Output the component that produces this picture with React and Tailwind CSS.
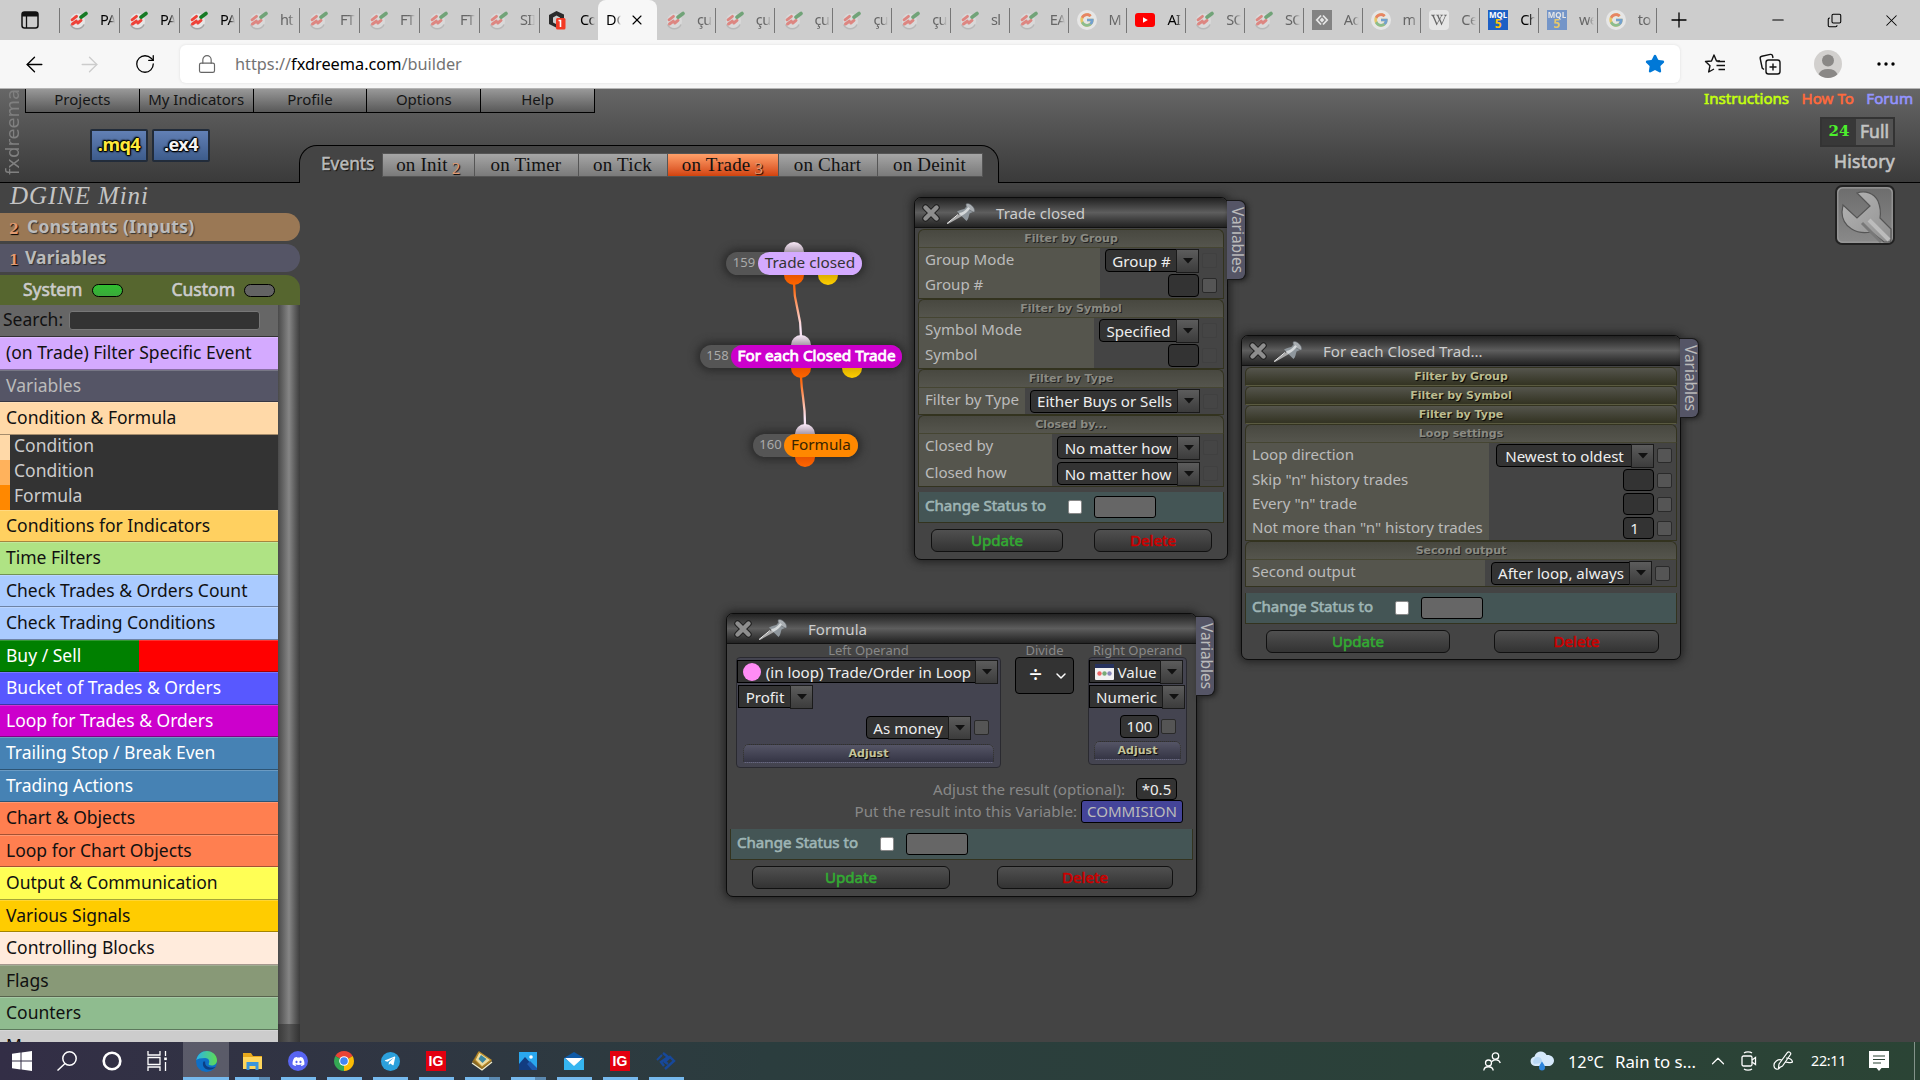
import {
  ArrowLeft,
  ArrowRight,
  RotateCw,
  Lock,
  Star,
  Plus,
  Minus,
  X,
  Copy,
  ChevronUp,
  ChevronDown,
} from 'lucide-react';
import { FaDiscord, FaTelegramPlane, FaWikipediaW } from 'react-icons/fa';
import { FcGoogle } from 'react-icons/fc';

/* ---------- browser tabs ---------- */

const leftTabs = [
  { icon: 'fx', label: 'PA', on: true },
  { icon: 'fx', label: 'PA', on: true },
  { icon: 'fx', label: 'PA', on: true },
  { icon: 'fx', label: 'ht' },
  { icon: 'fx', label: 'FT' },
  { icon: 'fx', label: 'FT' },
  { icon: 'fx', label: 'FT' },
  { icon: 'fx', label: 'SII' },
  { icon: 'codes', label: 'Co', on: true },
];

const rightTabs = [
  { icon: 'fx', label: 'çu' },
  { icon: 'fx', label: 'çu' },
  { icon: 'fx', label: 'çu' },
  { icon: 'fx', label: 'çu' },
  { icon: 'fx', label: 'çu' },
  { icon: 'fx', label: 'sl' },
  { icon: 'fx', label: 'EA' },
  { icon: 'google', label: 'M' },
  { icon: 'youtube', label: 'AI', on: true },
  { icon: 'fx', label: 'SO' },
  { icon: 'fx', label: 'SO' },
  { icon: 'ad', label: 'Ad' },
  { icon: 'google', label: 'm' },
  { icon: 'wiki', label: 'Ce' },
  { icon: 'mql', label: 'Ch', on: true },
  { icon: 'mql', label: 'we' },
  { icon: 'google', label: 'to' },
];

function Favicon({ type }) {
  if (type === 'google') {
    return (
      <span className="flex size-5 items-center justify-center rounded-full bg-white">
        <FcGoogle size={16} />
      </span>
    );
  }
  if (type === 'wiki') {
    return (
      <span className="flex size-5 items-center justify-center rounded bg-white text-black">
        <FaWikipediaW size={16} />
      </span>
    );
  }
  if (type === 'mql') {
    return (
      <span className="flex size-5 flex-col items-center justify-center bg-[#1d5fc4] text-[8px] leading-[8px] font-bold text-white">
        <span>MQL</span>
        <span className="text-[12px] leading-[10px] text-[#ffc40c]">5</span>
      </span>
    );
  }
  if (type === 'youtube') {
    return (
      <svg width="20" height="20" viewBox="0 0 20 20">
        <rect x="0" y="3" width="20" height="14" rx="3" fill="#f00" />
        <path d="M8 7.2v5.6l4.8-2.8z" fill="#fff" />
      </svg>
    );
  }
  if (type === 'ad') {
    return (
      <svg width="20" height="20" viewBox="0 0 20 20">
        <rect width="20" height="20" fill="#3c3c3c" />
        <path d="M9 5.500 4.800 10 9 14.500M11 5.500l4.200 4.500L11 14.500" fill="none" stroke="#fff" strokeWidth="1.800" />
        <path d="M10 7.500 12.300 10 10 12.500 7.700 10z" fill="#fff" />
      </svg>
    );
  }
  if (type === 'codes') {
    return (
      <svg width="20" height="20" viewBox="0 0 20 20">
        <path d="M8.500 1 16 4.500v5h-4V7.500L8.500 5.500 5 7.500v5l4 2v3.500L1 14V5z" fill="#2b2b2b" />
        <rect x="8" y="8" width="9.500" height="11.500" rx="1.500" fill="#f33a24" />
        <path d="M10.500 10.500h2V17" fill="none" stroke="#fff" strokeWidth="1.600" />
      </svg>
    );
  }
  return (
    <svg width="20" height="20" viewBox="0 0 20 20">
      <circle cx="9.500" cy="11" r="7.500" fill="#e6e6e6" />
      <path d="M2.500 14.500a7.500 7.500 0 0 0 13.500 0" fill="none" stroke="#a5a5a5" strokeWidth="1.600" />
      <path d="M4 9.800 8.500 6.300" stroke="#ee4238" strokeWidth="2.800" strokeLinecap="round" />
      <path d="M4.500 14 8.300 11.200M9.800 13 13 10.400" stroke="#ee4238" strokeWidth="3" strokeLinecap="round" />
      <path d="M13 7.200 18 3.500" stroke="#177a25" strokeWidth="3.600" strokeLinecap="round" />
    </svg>
  );
}

function Tab({ tab, narrow }) {
  return (
    <div className={`flex h-full shrink-0 items-center ${narrow ? 'w-[58.8px]' : 'w-[60px]'}`}>
      <span className={`ml-2 ${tab.on ? '' : 'opacity-50'}`}>
        <Favicon type={tab.icon} />
      </span>
      <span
        className={`ml-3 w-[15px] overflow-hidden text-[14.5px] tracking-[-0.6px] whitespace-nowrap [mask-image:linear-gradient(to_right,#000_60%,transparent)] ${
          tab.on ? 'text-black' : 'text-[#666]'
        }`}
      >
        {tab.label}
      </span>
      <span className="ml-auto h-[25px] w-px bg-[#777]" />
    </div>
  );
}

function Browser() {
  return (
    <div className="h-[89px] shrink-0 border-b border-[#b5b5b5] bg-[#f7f7f7]">
      <div className="flex h-10 items-center bg-[#cdcdcd]">
        <div className="flex h-full w-[60px] shrink-0 items-center">
          <svg className="ml-[21px]" width="18" height="18" viewBox="0 0 18 18">
            <rect x="1" y="1" width="16" height="16" rx="2.500" fill="none" stroke="#111" strokeWidth="1.500" />
            <path d="M1 3a2 2 0 0 1 2-2h12a2 2 0 0 1 2 2v2.500H1z" fill="#111" />
            <path d="M5.500 5v12" stroke="#111" strokeWidth="1.300" />
          </svg>
          <span className="ml-auto h-[25px] w-px bg-[#777]" />
        </div>
        {leftTabs.map((tab, i) => (
          <Tab key={i} tab={tab} />
        ))}
        <div className="-ml-[2px] flex h-full w-[59px] shrink-0 items-center rounded-t-lg bg-[#f7f7f7]">
          <span className="ml-2 w-[15px] overflow-hidden text-[14.5px] text-black [mask-image:linear-gradient(to_right,#000_60%,transparent)]">
            DG
          </span>
          <X className="ml-2" size={16} strokeWidth={1.7} />
        </div>
        {rightTabs.map((tab, i) => (
          <Tab key={i} tab={tab} narrow />
        ))}
        <Plus className="ml-2.5" size={24} strokeWidth={1.3} />
        <div className="mr-[19px] ml-auto flex items-center gap-[40px]">
          <Minus size={18} strokeWidth={1.4} />
          <Copy className="-scale-x-100 rotate-180" size={15} strokeWidth={1.7} />
          <X size={19} strokeWidth={1.3} />
        </div>
      </div>
      <div className="flex h-12 items-center">
        <ArrowLeft className="ml-[22px] text-black" size={25} strokeWidth={1.3} />
        <ArrowRight className="ml-[30px] text-[#ccc]" size={25} strokeWidth={1.3} />
        <RotateCw className="ml-[32px] text-black" size={22} strokeWidth={1.4} />
        <div className="ml-6 flex h-[38px] w-[1500px] items-center rounded-md bg-white shadow-[0_0_3px_#ddd]">
          <Lock className="ml-[17px] text-[#666]" size={20} strokeWidth={1.4} />
          <span className="ml-[18px] text-[16.3px] text-[#737373]">
            https://<span className="text-black">fxdreema.com</span>/builder
          </span>
          <Star className="mr-[15px] ml-auto fill-[#0078d7] text-[#0078d7]" size={20} />
        </div>
        <svg className="ml-6" width="22" height="22" viewBox="0 0 22 22" fill="none" stroke="#111" strokeWidth="1.400">
          <path d="M16 8h-3.500L10 2 7.500 8 1.500 8.500 6 12.700 4.700 19 10 16" strokeLinejoin="round" />
          <path d="M13.500 8.500H21M12.500 12.500H21M14.500 16.500H21" />
        </svg>
        <svg className="ml-[33px]" width="22" height="22" viewBox="0 0 22 22" fill="none" stroke="#111" strokeWidth="1.400">
          <path d="M5 16.500 3.200 15 1.200 5.500a2 2 0 0 1 1.600-2.300l8.500-1.800a2 2 0 0 1 2.300 1.600l.4 2" />
          <rect x="7" y="7" width="14" height="14" rx="2.500" />
          <path d="M14 10.500v7M10.500 14h7" />
        </svg>
        <svg className="ml-[33px]" width="28" height="28" viewBox="0 0 28 28">
          <circle cx="14" cy="14" r="14" fill="#d2d0ce" />
          <circle cx="14" cy="10.500" r="6" fill="#8a8886" />
          <path d="M4.500 24.200a10 7.500 0 0 1 19 0A14 14 0 0 1 4.500 24.200z" fill="#8a8886" />
        </svg>
        <svg className="ml-[35px]" width="18" height="4" viewBox="0 0 18 4">
          <circle cx="2" cy="2" r="1.700" />
          <circle cx="9" cy="2" r="1.700" />
          <circle cx="16" cy="2" r="1.700" />
        </svg>
      </div>
    </div>
  );
}

/* ---------- app header ---------- */

const menu = ['Projects', 'My Indicators', 'Profile', 'Options', 'Help'];

function EventTab({ label, count, active, className }) {
  return (
    <div
      className={`flex h-6 items-center justify-center border-y border-r border-[#555] font-['Liberation_Serif',serif] text-[19px] tracking-[0.2px] text-[#111] ${
        active ? 'bg-linear-to-b from-[#ff9f68] to-[#d2420a]' : 'bg-linear-to-b from-[#a6a6a6] to-[#7a7a7a]'
      } ${className}`}
    >
      {label}
      {count && <span className="mt-2 ml-1 text-[17px] text-[#e09a70] [text-shadow:1px_1px_1px_#000]">{count}</span>}
    </div>
  );
}

function Header() {
  return (
    <header className="relative h-[94px] shrink-0 bg-linear-to-b from-[#666] to-[#3a3a3a]">
      <div className="absolute top-0 left-[3px] h-[86px] rotate-180 font-['DejaVu_Sans',sans-serif] text-[18px] leading-[19px] text-[#808080] [writing-mode:vertical-rl]">
        fxdreema
      </div>
      <div className="flex h-6 justify-between">
        <div className="ml-[25px] flex border-b border-l border-black">
          {menu.map((item) => (
            <div
              key={item}
              className="flex w-[113.8px] justify-center border-r border-black bg-linear-to-b from-[#999] to-[#595959] text-[15px] leading-[21px] whitespace-nowrap text-[#151515]"
            >
              {item}
            </div>
          ))}
        </div>
        <div className="mr-[7px] flex gap-[12.500px] text-[15.1px] leading-[19px] [-webkit-text-stroke:0.6px_currentColor]">
          <span className="text-[#c4ff0e]">Instructions</span>
          <span className="text-[#ff6a3c]">How To</span>
          <span className="text-[#9494ff]">Forum</span>
        </div>
      </div>
      <div className="flex h-[70px] items-end">
        <div className="flex h-full w-[300px] gap-1 border-b border-black pt-4 pl-[90px] text-[18px] leading-[27px] font-bold tracking-[-0.5px]">
          <span className="h-[33px] w-[58px] rounded-xs border-2 border-[#222c3a] bg-linear-to-b from-[#6280b5] to-[#3d5c8c] text-center text-[#ffe93c] [text-shadow:1px_0_1px_#000,-1px_0_1px_#000,0_1px_1px_#000,0_-1px_1px_#000,1px_1px_2px_#000,-1px_-1px_2px_#000]">
            .mq4
          </span>
          <span className="h-[33px] w-[58px] rounded-xs border-2 border-[#222c3a] bg-linear-to-b from-[#6280b5] to-[#3d5c8c] text-center text-[#f4f4f4] [text-shadow:1px_0_1px_#000,-1px_0_1px_#000,0_1px_1px_#000,0_-1px_1px_#000,1px_1px_2px_#000,-1px_-1px_2px_#000]">
            .ex4
          </span>
        </div>
        <div className="-ml-px flex h-[38px] w-[700px] rounded-t-[18px] border-x border-t border-black bg-[#444] pt-[7px] pl-[21px]">
          <span className="w-[61px] text-[17.3px] leading-[22px] text-[#bbb] [-webkit-text-stroke:0.5px_currentColor] [text-shadow:1px_1px_1px_#000]">
            Events
          </span>
          <EventTab label="on Init" count="2" className="w-[92.500px] border-l" />
          <EventTab label="on Timer" className="w-[104px]" />
          <EventTab label="on Tick" className="w-[89px]" />
          <EventTab label="on Trade" count="3" active className="w-[111px]" />
          <EventTab label="on Chart" className="w-[99px]" />
          <EventTab label="on Deinit" className="w-[105px]" />
        </div>
        <div className="flex h-full flex-1 flex-col items-end border-b border-black pt-1 pr-[25px] text-[17.5px] text-[#c4c4c4] [-webkit-text-stroke:0.6px_currentColor]">
          <div className="flex h-[30px] w-[75px] border-2 border-[#333] leading-[24px]">
            <span className="w-[34px] bg-[#383838] text-center font-['DejaVu_Serif',serif] text-[15px] font-bold text-[#4cf02c] [-webkit-text-stroke:0]">
              24
            </span>
            <span className="flex-1 bg-[#525252] text-center">Full</span>
          </div>
          <span className="leading-[28px] tracking-[0.3px]">History</span>
        </div>
      </div>
    </header>
  );
}

/* ---------- sidebar ---------- */

const topGroups = [
  { label: '(on Trade) Filter Specific Event', color: 'bg-[#d4aaff] text-[#111]' },
  { label: 'Variables', color: 'bg-[#555566] text-[#bbb]' },
  { label: 'Condition & Formula', color: 'bg-[#ffd9a8] text-[#111]' },
];

const subItems = [
  { label: 'Condition', color: 'border-[#ffd9a8]' },
  { label: 'Condition', color: 'border-[#ffb25c]' },
  { label: 'Formula', color: 'border-[#ff8800]' },
];

const groups = [
  { label: 'Conditions for Indicators', color: 'bg-[#ffd060] text-[#111]' },
  { label: 'Time Filters', color: 'bg-[#afe384] text-[#111]' },
  { label: 'Check Trades & Orders Count', color: 'bg-[#aacbff] text-[#111]' },
  { label: 'Check Trading Conditions', color: 'bg-[#aacbff] text-[#111]' },
  { label: 'Buy / Sell', color: 'bg-linear-to-r from-[#008000] from-50% to-[#ff0000] to-50% text-white' },
  { label: 'Bucket of Trades & Orders', color: 'bg-[#5858ff] text-white' },
  { label: 'Loop for Trades & Orders', color: 'bg-[#cc00cc] text-white' },
  { label: 'Trailing Stop / Break Even', color: 'bg-[#4682b4] text-white' },
  { label: 'Trading Actions', color: 'bg-[#4682b4] text-white' },
  { label: 'Chart & Objects', color: 'bg-[#ff7f50] text-[#111]' },
  { label: 'Loop for Chart Objects', color: 'bg-[#ff7f50] text-[#111]' },
  { label: 'Output & Communication', color: 'bg-[#ffff55] text-[#111]' },
  { label: 'Various Signals', color: 'bg-[#ffcc00] text-[#111]' },
  { label: 'Controlling Blocks', color: 'bg-[#ffebdc] text-[#111]' },
  { label: 'Flags', color: 'bg-[#889977] text-[#111]' },
  { label: 'Counters', color: 'bg-[#8fbc8f] text-[#111]' },
  { label: 'More', color: 'bg-[#cccccc] text-[#111]' },
];

function Group({ item }) {
  return (
    <div
      className={`h-[32.5px] shrink-0 border-t border-b border-t-white/20 border-b-black/35 bg-origin-border pl-[6px] leading-[28px] whitespace-nowrap ${item.color}`}
    >
      {item.label}
    </div>
  );
}

function Sidebar() {
  return (
    <aside className="flex w-[300px] shrink-0 flex-col overflow-hidden text-[17.5px]">
      <div className="h-[30px] shrink-0 pl-[10px] font-['Liberation_Serif',serif] text-[25px] leading-[25px] tracking-[0.9px] text-[#c4c4c4] italic">
        DGINE Mini
      </div>
      <div className="flex h-7 shrink-0 items-center rounded-r-[14px] bg-[#9a7855] pb-0.5 pl-[9px] font-bold tracking-[0.33px] text-[#bbb] [text-shadow:1px_1px_1px_#333]">
        <span className="mt-1.5 mr-[6px] w-[12px] font-['DejaVu_Serif',serif] text-[14px] text-[#e09a70] [text-shadow:1px_1px_1px_#000]">2</span>
        Constants (Inputs)
      </div>
      <div className="mt-[3px] flex h-7 shrink-0 items-center rounded-r-[14px] bg-[#555566] pb-0.5 pl-[9px] font-bold tracking-[0.1px] text-[#bbb] [text-shadow:1px_1px_1px_#333]">
        <span className="mt-1.5 mr-[6px] w-[10px] font-['DejaVu_Serif',serif] text-[14px] text-[#e09a70] [text-shadow:1px_1px_1px_#000]">1</span>
        Variables
      </div>
      <div className="mt-[3px] flex h-[30px] shrink-0 items-center rounded-tr-[14px] bg-[#56662f] pb-px pl-[23px] text-[#ccc] [-webkit-text-stroke:0.6px_currentColor]">
        <span className="pb-px">System</span>
        <span className="mt-[2px] ml-[10px] h-[13px] w-[31px] rounded-full border border-black bg-linear-to-b from-[#2fbf2f] to-[#3aa83a]" />
        <span className="ml-auto pb-px">Custom</span>
        <span className="mt-[2px] mr-[25px] ml-[9px] h-[13px] w-[31px] rounded-full border border-black bg-[#636363]" />
      </div>
      <div className="flex min-h-0 flex-1">
        <div className="flex w-[278px] flex-col overflow-hidden">
          <div className="flex h-[32px] shrink-0 items-center border-b border-[#333] bg-[#666] pl-[3px] text-[#111]">
            <span className="pb-0.5">Search:</span>
            <span className="ml-[6px] h-[19px] w-[191px] rounded-[3px] border border-[#777] bg-[#333]" />
          </div>
          {topGroups.map((item) => (
            <Group key={item.label} item={item} />
          ))}
          <div className="shrink-0 bg-[#333] text-[#ccc]">
            {subItems.map((item, i) => (
              <div key={i} className={`h-[25px] border-l-10 pl-1 leading-[20px] ${item.color}`}>
                {item.label}
              </div>
            ))}
          </div>
          {groups.map((item) => (
            <Group key={item.label} item={item} />
          ))}
        </div>
        <div className="flex w-[22px] flex-col bg-linear-to-r from-[#3a3a3a] via-[#555] to-[#333]">
          <div className="h-[719px] bg-linear-to-r from-[#4a4a4a] via-[#868686] to-[#3c3c3c]" />
        </div>
      </div>
    </aside>
  );
}

/* ---------- diagram ---------- */

function Block({ id, label, className, color, first, second }) {
  return (
    <div className={`absolute flex h-[22.500px] items-center rounded-full bg-[#555] shadow-[0_0_8px_3px_#2a2a2a] ${className}`}>
      <span className={`absolute bottom-full h-[10px] w-5 rounded-t-full bg-linear-to-b from-[#fbeafa] to-[#a89aa8] ${first}`} />
      <span className={`absolute top-full h-[10px] w-5 rounded-b-full bg-linear-to-b from-[#e85500] to-[#ff6600] ${first}`} />
      {second && <span className={`absolute top-full h-[10px] w-5 rounded-b-full bg-linear-to-b from-[#dcae00] to-[#ffd000] ${second}`} />}
      <span className="flex-1 pb-px pl-1 text-center text-[13px] text-[#aaa]">{id}</span>
      <span className={`flex h-full items-center justify-center rounded-full pb-0.5 text-[15.3px] leading-none whitespace-nowrap ${color}`}>
        {label}
      </span>
    </div>
  );
}

function Diagram() {
  return (
    <>
      <svg className="absolute top-[90px] left-[480px]" width="40" height="160">
        <defs>
          <linearGradient id="wire" x1="0" y1="0" x2="0" y2="1">
            <stop offset="0.1" stopColor="#ff6a10" />
            <stop offset="0.85" stopColor="#fbe6f6" />
          </linearGradient>
        </defs>
        <path d="M14 10C14 36 21 36 21 63" fill="none" stroke="url(#wire)" strokeWidth="2.300" />
        <path d="M21 104C22 126 25 126 25 152" fill="none" stroke="url(#wire)" strokeWidth="2.300" />
      </svg>
      <Block
        id="159"
        label="Trade closed"
        className="top-[69px] left-[426px] w-[136px]"
        color="w-[104px] bg-[#d4aaff] text-[#333]"
        first="left-[58px]"
        second="left-[92px]"
      />
      <Block
        id="158"
        label="For each Closed Trade"
        className="top-[162px] left-[400px] w-[202px]"
        color="w-[171px] bg-[#cc00cc] text-white [-webkit-text-stroke:0.8px_currentColor]"
        first="left-[91px]"
        second="left-[142px]"
      />
      <Block
        id="160"
        label="Formula"
        className="top-[251px] left-[453px] w-[105px]"
        color="w-[74px] bg-[#ff8800] text-[#3a2400]"
        first="left-[42px]"
      />
    </>
  );
}

/* ---------- block windows ---------- */

function Pin() {
  return (
    <svg width="30" height="23" viewBox="0 0 30 23">
      <path d="M1 21.500 14 11.500l2 2.500L2 22z" fill="#aaa" />
      <path d="M11 9.500c3-2 6-1.500 8-3l2-3.500 6 7-3.500 1.500c-1 2.500-.5 5-3 7.500z" fill="#8f979d" />
      <path d="M20 2c3-2.500 10 4 8.500 8-2 .5-9-4-8.500-8z" fill="#a9aeb2" stroke="#5d6266" strokeWidth="0.600" />
      <path d="M13 11c3 0 7-3 9-6l2 1.500c-2 3-6 6.500-9 7.500z" fill="#d4d8da" />
      <path d="M1 21.500 12 12.500" stroke="#eee" strokeWidth="1" />
    </svg>
  );
}

function CloseMark() {
  return (
    <svg width="18" height="18" viewBox="0 0 18 18">
      <path d="M3.500 3.500 14.500 14.500M14.500 3.500 3.500 14.500" stroke="#222" strokeWidth="6.500" strokeLinecap="round" />
      <path d="M3.500 3.500 14.500 14.500M14.500 3.500 3.500 14.500" stroke="#8e8e8e" strokeWidth="4.400" strokeLinecap="round" />
    </svg>
  );
}

function Window({ title, className, children, update, remove, actions }) {
  return (
    <section className={`absolute rounded-[7px] border border-[#0c0c0c] bg-[#444] text-[15.1px] shadow-[0_0_9px_2px_#222] ${className}`}>
      <div className="absolute top-[2px] left-full h-[80px] w-[19px] rounded-r-[7px] border border-l-0 border-[#181818] bg-[#555566] text-center text-[15.4px] leading-[15px] text-[#bbb] shadow-[2px_1px_5px_#222] [writing-mode:vertical-rl]">
        Variables
      </div>
      <div className="flex h-[30px] items-center rounded-t-[6px] border-b border-[#111] bg-linear-to-b from-[#222] via-[#5e5e5e] via-50% to-[#222] pt-px pl-[7px] text-[#ccc]">
        <CloseMark />
        <span className="mr-[20px] ml-[6px]">
          <Pin />
        </span>
        {title}
      </div>
      <div className="px-[3px]">
        {children}
        <div className="flex h-[31px] items-center border-x border-b border-[#33331f] bg-[#445555] pl-[6px] text-[#9fb5b5]">
          <span className="w-[142.500px] pb-[3px] [-webkit-text-stroke:0.6px_currentColor]">Change Status to</span>
          <span className="size-[14px] rounded-xs border border-[#888] bg-white" />
          <span className="ml-[12px] h-[22px] w-[62px] rounded-[3px] border border-black bg-[#666]" />
        </div>
      </div>
      <div className={`mt-[6px] flex ${actions}`}>
        <div
          className={`flex h-[23px] items-center justify-center rounded-[6px] border border-[#111] bg-linear-to-b from-[#505050] to-[#333] text-[#33aa33] [-webkit-text-stroke:0.6px_currentColor] ${update}`}
        >
          Update
        </div>
        <div
          className={`flex h-[23px] items-center justify-center rounded-[6px] border border-[#111] bg-linear-to-b from-[#505050] to-[#333] text-[#cc0000] [-webkit-text-stroke:0.6px_currentColor] ${remove}`}
        >
          Delete
        </div>
      </div>
    </section>
  );
}

function SectionHead({ children, closed }) {
  return (
    <div
      className={`h-[19px] rounded-t-[6px] border text-center font-['DejaVu_Sans',sans-serif] text-[11px] leading-[18px] font-bold ${
        closed
          ? 'border-[#33331f] border-b-[#5a5a40] bg-linear-to-b from-[#55554d] to-[#333322] text-[#bcbc90] [text-shadow:1px_1px_1px_#000]'
          : 'border-[#33331f] border-b-[#454532] bg-linear-to-b from-[#484840] to-[#55554d] text-[#8b8b83] [text-shadow:1px_1px_0_#222]'
      }`}
    >
      {children}
    </div>
  );
}

function Section({ title, children }) {
  return (
    <div>
      <SectionHead>{title}</SectionHead>
      <div className="border-x border-b border-[#33331f]">{children}</div>
    </div>
  );
}

function Row({ label, className, labelWidth, children }) {
  return (
    <div className={`flex ${className}`}>
      <span className={`shrink-0 bg-[#55554d] pl-[6px] leading-[22px] whitespace-nowrap text-[#bbb] ${labelWidth}`}>{label}</span>
      <span className="flex flex-1 items-center justify-end gap-[3px]">{children}</span>
    </div>
  );
}

function Select({ className, children, square }) {
  return (
    <span
      className={`flex h-[23px] shrink-0 items-center border border-black bg-[#333] text-[#eee] ${square ? '' : 'rounded-l-[4px]'} ${className}`}
    >
      <span className="flex flex-1 items-center justify-center pl-px leading-[20px] whitespace-nowrap">{children}</span>
      <span className="-my-px -mr-px flex h-[24px] w-[23px] shrink-0 items-center justify-center border border-[#1a1a1a] bg-linear-to-b from-[#5c5c5c] to-[#3c3c3c]">
        <svg width="10" height="6" viewBox="0 0 10 6">
          <path d="M0 0h10L5 5.500z" fill="#111" />
        </svg>
      </span>
    </span>
  );
}

function Input({ children, className = 'w-[31px]' }) {
  return (
    <span className={`flex h-[22.500px] shrink-0 items-center justify-center rounded-[4px] border border-black bg-[#333] text-[#eee] ${className}`}>
      {children}
    </span>
  );
}

function Check({ faint }) {
  return (
    <span className={`size-[15px] shrink-0 rounded-[2px] border ${faint ? 'border-[#404040] bg-[#454545]' : 'border-[#2a2a2a] bg-[#555]'}`} />
  );
}

function AdjustBar({ className }) {
  return (
    <div
      className={`h-[19px] rounded-t-[6px] border-x border-t border-b border-dotted border-[#33332a] border-b-[#666680] bg-linear-to-b from-[#555566] to-[#353545] text-center font-['DejaVu_Sans',sans-serif] text-[11px] leading-[18px] font-bold text-[#c4c49c] [text-shadow:1px_1px_1px_#000] ${className}`}
    >
      Adjust
    </div>
  );
}

function TradeClosed() {
  return (
    <Window
      title="Trade closed"
      className="top-[14px] left-[614px] h-[363px] w-[314px]"
      actions="pl-[16px] gap-[31px]"
      update="w-[132px]"
      remove="w-[118px]"
    >
      <div className="mb-[5px] pt-[1px]">
        <Section title="Filter by Group">
          <Row label="Group Mode" labelWidth="w-[181px]" className="h-[25px] pr-[6px]">
            <Select className="w-[94px]">Group #</Select>
            <Check faint />
          </Row>
          <Row label="Group #" labelWidth="w-[181px]" className="h-[25px] pr-[6px]">
            <Input />
            <Check />
          </Row>
        </Section>
        <Section title="Filter by Symbol">
          <Row label="Symbol Mode" labelWidth="w-[175px]" className="h-[25px] pr-[6px]">
            <Select className="w-[100px]">Specified</Select>
            <Check faint />
          </Row>
          <Row label="Symbol" labelWidth="w-[175px]" className="h-[25px] pr-[6px]">
            <Input />
            <Check faint />
          </Row>
        </Section>
        <Section title="Filter by Type">
          <Row label="Filter by Type" labelWidth="w-[106px]" className="h-[26px] pr-[5px]">
            <Select className="w-[170px]">Either Buys or Sells</Select>
            <Check faint />
          </Row>
        </Section>
        <Section title="Closed by...">
          <Row label="Closed by" labelWidth="w-[133px]" className="h-[27px] pr-[5px]">
            <Select className="w-[143px]">No matter how</Select>
            <Check faint />
          </Row>
          <Row label="Closed how" labelWidth="w-[133px]" className="h-[25px] pr-[5px]">
            <Select className="w-[143px]">No matter how</Select>
            <Check faint />
          </Row>
        </Section>
      </div>
    </Window>
  );
}

function ForEachClosed() {
  return (
    <Window
      title="For each Closed Trad..."
      className="top-[152px] left-[941px] h-[325px] w-[440px]"
      actions="pl-[24px] gap-[44px]"
      update="w-[184px]"
      remove="w-[165px]"
    >
      <div className="mb-[6px] pt-[1px]">
        <SectionHead closed>Filter by Group</SectionHead>
        <SectionHead closed>Filter by Symbol</SectionHead>
        <SectionHead closed>Filter by Type</SectionHead>
        <Section title="Loop settings">
          <Row label="Loop direction" labelWidth="w-[243px]" className="h-[25px] pr-[4px]">
            <Select className="w-[158px]">Newest to oldest</Select>
            <Check />
          </Row>
          <Row label={'Skip "n" history trades'} labelWidth="w-[243px]" className="h-[24px] pr-[4px]">
            <Input />
            <Check />
          </Row>
          <Row label={'Every "n" trade'} labelWidth="w-[243px]" className="h-[24px] pr-[4px]">
            <Input />
            <Check />
          </Row>
          <Row label={'Not more than "n" history trades'} labelWidth="w-[243px]" className="h-[24px] pr-[4px]">
            <Input>
              <span className="mr-2">1</span>
            </Input>
            <Check />
          </Row>
        </Section>
        <Section title="Second output">
          <Row label="Second output" labelWidth="w-[239px]" className="h-[26px] pr-[6px]">
            <Select className="w-[161px]">After loop, always</Select>
            <Check />
          </Row>
        </Section>
      </div>
    </Window>
  );
}

function FormulaWindow() {
  return (
    <Window
      title="Formula"
      className="top-[430px] left-[426px] h-[284px] w-[471px]"
      actions="pl-[25px] gap-[47px]"
      update="w-[198px]"
      remove="w-[176px]"
    >
      <div className="flex h-[185px] flex-col">
        <div className="flex pl-[6px]">
          <div className="w-[265px]">
            <div className="h-[13px] text-center text-[13px] leading-[12px] text-[#888]">Left Operand</div>
            <div className="flex h-[111px] flex-col rounded-[4px] border border-[#2a2a30] bg-[#444450] pt-[2px]">
              <Select square className="w-[261px]">
                <span className="mr-[5px] size-[18px] rounded-full bg-[#ff8cf5]" />
                (in loop) Trade/Order in Loop
              </Select>
              <Select square className="mt-[2px] ml-px w-[75px]">
                Profit
              </Select>
              <div className="mt-[8px] flex items-center justify-end gap-[3px] pr-[11px]">
                <Select className="w-[105px]">As money</Select>
                <Check />
              </div>
              <AdjustBar className="mx-[6px] mt-[5px]" />
            </div>
          </div>
          <div className="ml-[14px] w-[59px]">
            <div className="h-[13px] text-center text-[13px] leading-[12px] text-[#888]">Divide</div>
            <div className="flex h-[37px] items-center rounded-[4px] border border-black bg-[#333] pl-[13px] text-[23px] leading-[30px] text-white">
              <span className="pb-1">÷</span>
              <ChevronDown className="ml-[11px]" size={16} strokeWidth={2.2} />
            </div>
          </div>
          <div className="ml-[14px] w-[99px]">
            <div className="h-[13px] text-center text-[13px] leading-[12px] whitespace-nowrap text-[#888]">Right Operand</div>
            <div className="flex h-[108px] flex-col rounded-[4px] border border-[#2a2a30] bg-[#444450] pt-[2px]">
              <Select square className="w-[94px]">
                <svg className="mr-[4px]" width="19" height="16" viewBox="0 0 19 16">
                  <rect x="0" y="0" width="19" height="16" rx="1" fill="#f2f2f2" />
                  <path d="M0 0h19v4H0z" fill="#26325e" />
                  <circle cx="4.500" cy="9.500" r="2.200" fill="#e66" />
                  <circle cx="9.500" cy="9.500" r="2.200" fill="#7a7" />
                  <circle cx="14.500" cy="9.500" r="2.200" fill="#88b" />
                </svg>
                Value
              </Select>
              <Select square className="mt-[2px] w-[96px]">
                Numeric
              </Select>
              <div className="mt-[7px] flex items-center justify-end gap-[2px] pr-[10px]">
                <Input className="w-[39px]">100</Input>
                <Check />
              </div>
              <AdjustBar className="mx-[5px] mt-[3px]" />
            </div>
          </div>
        </div>
        <div className="mt-[10px] flex h-[22px] items-center justify-end pr-[16px] text-[#888]">
          <span className="mr-[11px]">Adjust the result (optional):</span>
          <Input className="w-[41px]">*0.5</Input>
        </div>
        <div className="flex h-[23px] items-center justify-end pr-[10px] text-[#888]">
          <span className="mr-[4px] pb-px">Put the result into this Variable:</span>
          <span className="flex h-[23px] w-[102px] items-center justify-center rounded-[3px] border border-black bg-[#444499] pb-px text-[#bbb]">
            COMMISION
          </span>
        </div>
      </div>
    </Window>
  );
}

function Wrench() {
  return (
    <svg className="absolute top-[2px] left-[1535px]" width="60" height="61" viewBox="0 0 60 61">
      <defs>
        <linearGradient id="plate" x1="0" y1="0" x2="0" y2="1">
          <stop offset="0" stopColor="#6c6c6c" />
          <stop offset="1" stopColor="#8a8a8a" />
        </linearGradient>
        <linearGradient id="steel" x1="0" y1="0" x2="1" y2="1">
          <stop offset="0" stopColor="#b5b5b5" />
          <stop offset="1" stopColor="#909090" />
        </linearGradient>
      </defs>
      <rect x="1" y="1" width="58" height="58" rx="6" fill="url(#plate)" stroke="#222" strokeWidth="2" />
      <rect x="2.800" y="2.800" width="54.400" height="54.400" rx="5" fill="none" stroke="#9a9a9a" strokeWidth="1.200" />
      <path
        d="M22 8c8-3 17 0 21 8 2 5 3 11 2 17l11 11v11l-1 2h-6L36 47C22 50 7 42 7 27l1-7 14 13 13-12z"
        fill="url(#steel)"
        stroke="#555"
        strokeWidth="1.200"
      />
      <path d="M27 38 46 57" stroke="#787878" strokeWidth="3" />
      <path d="M34 35 54 55" stroke="#bcbcbc" strokeWidth="4" />
    </svg>
  );
}

/* ---------- taskbar ---------- */

function EdgeIcon() {
  return (
    <svg width="21" height="21" viewBox="0 0 24 24">
      <defs>
        <linearGradient id="edgeTop" x1="0" y1="0" x2="1" y2="0">
          <stop offset="0" stopColor="#2bb3e8" />
          <stop offset="1" stopColor="#5fdc52" />
        </linearGradient>
      </defs>
      <circle cx="12" cy="12" r="12" fill="#0f6fc6" />
      <path d="M.3 10.500C2 3 7 0 12.500 0 19 0 24 5 24 10.500c0 4-3 6-6 6-2.500 0-3.800-1-3.500-2 2-3-.5-6.500-4-6.500-5 0-9 1-10.200 2.500z" fill="url(#edgeTop)" />
      <path d="M8.500 12c-2 4 1 9.500 6.500 9.500 3.500 0 5.500-1.500 7.500-3.500-3 1.500-13 2-12-6z" fill="#0b3f86" />
    </svg>
  );
}

function ChromeIcon() {
  return (
    <svg width="20" height="20" viewBox="0 0 20 20">
      <path d="M10 10 1.340 5A10 10 0 0 1 18.660 5z" fill="#ea4335" />
      <path d="M10 10 18.660 5A10 10 0 0 1 10 20z" fill="#fbbc05" />
      <path d="M10 10V20A10 10 0 0 1 1.340 5z" fill="#34a853" />
      <circle cx="10" cy="10" r="4.800" fill="#fff" />
      <circle cx="10" cy="10" r="3.800" fill="#4285f4" />
    </svg>
  );
}

function IgIcon() {
  return (
    <span className="flex size-5 items-center justify-center bg-[#e3000f] font-['Liberation_Sans',sans-serif] text-[14px] font-bold text-white">
      IG
    </span>
  );
}

const apps = [
  { name: 'edge', icon: <EdgeIcon /> },
  {
    name: 'explorer',
    split: true,
    icon: (
      <svg width="19" height="17" viewBox="0 0 19 17">
        <path d="M0 0h8l2 3h9v13H0z" fill="#e8a91c" />
        <path d="M0 4h19v12H0z" fill="#ffd65c" />
        <path d="M3.500 9h12v8h-3v-4h-6v4h-3z" fill="#3a95dc" />
      </svg>
    ),
  },
  {
    name: 'discord',
    icon: (
      <span className="flex size-5 items-center justify-center rounded-full bg-[#5865f2] text-white">
        <FaDiscord size={13} />
      </span>
    ),
  },
  { name: 'chrome', icon: <ChromeIcon /> },
  {
    name: 'telegram',
    icon: (
      <span className="flex size-[19px] items-center justify-center rounded-full bg-[#2ca0dc] text-white">
        <FaTelegramPlane size={12} />
      </span>
    ),
  },
  { name: 'ig', icon: <IgIcon /> },
  {
    name: 'gold',
    split: true,
    icon: (
      <svg width="22" height="20" viewBox="0 0 22 20">
        <path d="M7 1 1 11l10 8 10-9z" fill="#8a6a24" />
        <path d="M8 1 4 9l7 7 9-7z" fill="#ecdca0" stroke="#b88a2a" strokeWidth="1.200" />
        <path d="M10 4 7.500 8l4 4 4-4z" fill="#3b86a0" />
        <path d="M1 12l10 7L21 11" fill="none" stroke="#f4f0d0" strokeWidth="1.300" />
      </svg>
    ),
  },
  {
    name: 'photos',
    split: true,
    icon: (
      <svg width="18" height="18" viewBox="0 0 18 18">
        <rect width="18" height="18" fill="#2aa7ee" />
        <path d="M0 12 6 5l12 13H0z" fill="#123c80" />
        <path d="M8 12l3-3 7 7v2H13z" fill="#1d58ac" />
        <circle cx="12" cy="5" r="1.800" fill="#fff" />
      </svg>
    ),
  },
  {
    name: 'mail',
    icon: (
      <svg width="20" height="18" viewBox="0 0 20 18">
        <path d="M0 6 10 0l10 6v12H0z" fill="#0f5aa6" />
        <path d="M0 6v12h20V6l-10 7z" fill="#35b5f0" />
        <path d="M1 6h18l-9 8z" fill="#fff" />
      </svg>
    ),
  },
  { name: 'ig2', icon: <IgIcon /> },
  {
    name: 'blue',
    icon: (
      <svg width="20" height="18" viewBox="0 0 20 18">
        <path d="M7 1 12 5 5 10l3 4M9 17l9-8-4-4-5 5 3 2" fill="none" stroke="#17489a" strokeWidth="2.400" />
        <path d="M1 8l5-5" stroke="#17489a" strokeWidth="2" />
      </svg>
    ),
  },
];

function Taskbar() {
  return (
    <footer className="flex h-[38px] shrink-0 bg-linear-to-r from-[#332e46] via-[#2b3d3e] via-40% to-[#2b4435] text-white">
      <div className="flex w-[183px] items-center">
        <svg className="ml-[12px]" width="20" height="20" viewBox="0 0 20 20" fill="#fff">
          <path d="M0 2.800 8.500 1.500v8H0zM9.500 1.400 20 0v9.500H9.500zM0 10.500h8.500v8L0 17.200zM9.500 10.500H20V20L9.500 18.600z" />
        </svg>
        <svg className="ml-[25px]" width="20" height="20" viewBox="0 0 20 20" fill="none" stroke="#fff" strokeWidth="1.500">
          <circle cx="12.500" cy="7.500" r="6.700" />
          <path d="M8 12.500.5 19.500" />
        </svg>
        <svg className="ml-[25px]" width="20" height="20" viewBox="0 0 20 20">
          <circle cx="10" cy="10" r="8.300" fill="none" stroke="#fff" strokeWidth="2.600" />
        </svg>
        <svg className="ml-[25px]" width="21" height="20" viewBox="0 0 21 20" fill="none" stroke="#fff" strokeWidth="1.300">
          <path d="M1 0v4h12V0M1 20v-4h12v4M1 6.500h12v7H1zM18.500 0v5M18.500 11v9" />
          <rect x="17.200" y="6.500" width="2.600" height="2.600" fill="#fff" stroke="none" />
        </svg>
      </div>
      {apps.map((app, i) => (
        <div key={app.name} className={`flex w-[46px] flex-col items-center ${i === 0 ? 'bg-white/20' : ''}`}>
          <div className="flex h-[35px] items-center pt-[3px]">{app.icon}</div>
          <div className={`flex h-[3px] bg-[#76b9ed] ${i === 0 ? 'w-full' : 'w-[35px]'}`}>
            {app.split && <span className="ml-auto w-[11px] bg-[#5b89b0]" />}
          </div>
        </div>
      ))}
      <div className="ml-auto flex items-center">
        <svg width="18" height="19" viewBox="0 0 18 19" fill="none" stroke="#fff" strokeWidth="1.300">
          <circle cx="12.500" cy="4" r="3.200" />
          <circle cx="5.500" cy="11" r="3" />
          <path d="M9 9.500c2-2.500 7-2.500 8.300 1.500M.8 18.500c.5-5 8.500-5 9.500 0" />
        </svg>
        <svg className="ml-[28px]" width="25" height="20" viewBox="0 0 25 20">
          <path d="M6 15a6 5 0 0 1-.5-9.500C7-1 15.500-1 17.500 4c4-.5 7.500 2 7.500 5.500S22 15 19.500 15z" fill="#d6e9fb" />
          <path d="M5 13a4.500 4.500 0 0 1 4-7c3 0 4.500 3 4 6" fill="#b8d8f5" />
          <path d="M13 10.500c2 3 3 4.500 3 6a3 3 0 0 1-6 0c0-1.500 1-3 3-6z" fill="#2f86dd" />
        </svg>
        <span className="mt-0.5 ml-[14px] w-[47px] text-[16.3px] whitespace-nowrap">12°C</span>
        <span className="mt-0.5 w-[95px] text-[16.8px] whitespace-nowrap">Rain to s...</span>
        <ChevronUp size={22} strokeWidth={1.3} className="-ml-[3px]" />
        <svg className="ml-[12px]" width="16" height="20" viewBox="0 0 16 20" fill="none" stroke="#fff" strokeWidth="1.300">
          <rect x="1" y="5" width="10" height="10" rx="1.500" />
          <path d="m11 9 3.500-2.500v7L11 11M3 2c2-1.500 6-1.500 8 0M3 18c2 1.500 6 1.500 8 0" />
        </svg>
        <svg className="ml-[16px]" width="20" height="20" viewBox="0 0 20 20" fill="none" stroke="#fff" strokeWidth="1.200">
          <path d="M6 13 14.500 1.500c1.500-1.500 4 .5 3 2L9.500 15 5.500 17zM9 9c-4-1.500-8.500 2-8 6s4.500 4 6 1.500M13 7c3 0 6 1 6.500 4-1.500 1.500-5 0-7.500 0" />
        </svg>
        <span className="ml-[18px] w-[58px] text-[14.300px] tracking-[-0.3px]">22:11</span>
        <svg width="20" height="20" viewBox="0 0 20 20">
          <path d="M0 0h20v17h-7.500L10 20l-2.500-3H0z" fill="#fff" />
          <path d="M4 5h12M4 8.500h12M4 12h8" stroke="#2b4435" strokeWidth="1.200" />
        </svg>
        <span className="mr-[5px] ml-[25px] h-[38px] w-px bg-[#83938a]" />
      </div>
    </footer>
  );
}

export default function App() {
  return (
    <div className="flex h-[1080px] w-[1920px] flex-col overflow-hidden bg-[#444] font-['Noto_Sans',sans-serif]">
      <Browser />
      <Header />
      <main className="flex min-h-0 flex-1">
        <Sidebar />
        <div className="relative flex-1">
          <Diagram />
          <TradeClosed />
          <ForEachClosed />
          <FormulaWindow />
          <Wrench />
        </div>
      </main>
      <Taskbar />
    </div>
  );
}
